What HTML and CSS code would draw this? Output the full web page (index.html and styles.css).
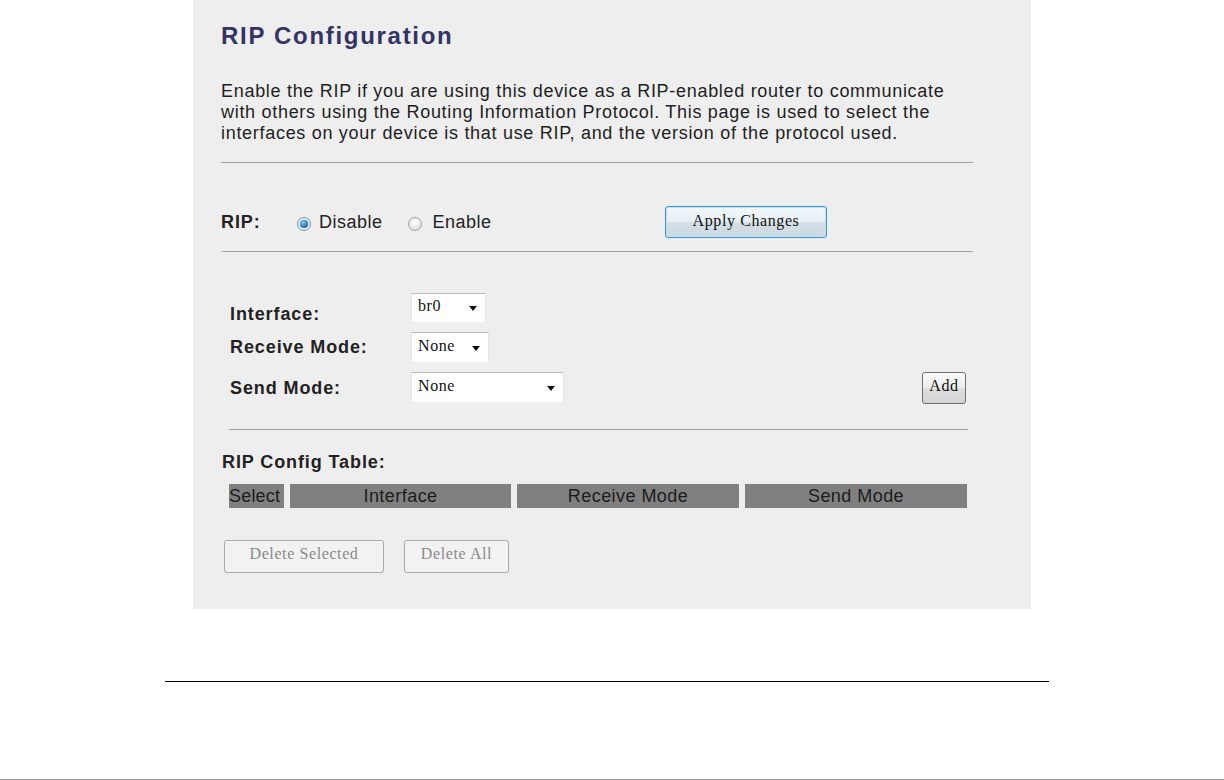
FILE: index.html
```html
<!DOCTYPE html>
<html>
<head>
<meta charset="utf-8">
<link rel="stylesheet" href="styles.css">
</head>
<body>
<div class="page">
  <div class="panel">
    <h1 class="title">RIP Configuration</h1>
    <p class="desc">Enable the RIP if you are using this device as a RIP-enabled router to communicate with others using the Routing Information Protocol. This page is used to select the interfaces on your device is that use RIP, and the version of the protocol used.</p>
    <hr class="rule rule-1">
    <div class="rip-row">
      <span class="lbl rip-lbl">RIP:</span>
      <label class="radio r-dis"><span class="dot on"></span>Disable</label>
      <label class="radio r-en"><span class="dot"></span>Enable</label>
      <button class="btn-apply">Apply Changes</button>
    </div>
    <hr class="rule rule-2">
    <div class="form">
      <div class="frow r1">
        <span class="lbl flbl">Interface:</span>
        <span class="sel s1">br0<i class="arr"></i></span>
      </div>
      <div class="frow r2">
        <span class="lbl flbl">Receive Mode:</span>
        <span class="sel s2">None<i class="arr"></i></span>
      </div>
      <div class="frow r3">
        <span class="lbl flbl">Send Mode:</span>
        <span class="sel s3">None<i class="arr"></i></span>
        <button class="btn-add">Add</button>
      </div>
    </div>
    <hr class="rule rule-3">
    <div class="lbl tbl-title">RIP Config Table:</div>
    <div class="thead">
      <span class="th c1">Select</span>
      <span class="th c2">Interface</span>
      <span class="th c3">Receive Mode</span>
      <span class="th c4">Send Mode</span>
    </div>
    <div class="del-row">
      <button class="btn-dis b1">Delete Selected</button>
      <button class="btn-dis b2">Delete All</button>
    </div>
  </div>
  <div class="black-line"></div>
</div>
<div class="bottom-line"></div>
</body>
</html>
```
FILE: styles.css
```css
html, body { margin: 0; padding: 0; background: #ffffff; }
body { width: 1224px; height: 780px; position: relative; overflow: hidden; font-family: "Liberation Sans", Arial, sans-serif; color: #222; }
.page { height: 779px; }
.panel { margin-left: 193px; width: 838px; height: 609px; background: #eeeeee; padding-left: 28px; box-sizing: border-box; overflow: hidden; }
.panel > * { width: 752px; }
.title { margin: 0; padding-top: 22px; font-size: 24px; line-height: 28px; font-weight: bold; color: #333366; letter-spacing: 1.7px; }
.desc { margin: 31px 0 0 0; width: 738px; font-size: 18px; line-height: 21px; color: #1e1e1e; letter-spacing: 0.7px; }
.lbl { font-weight: bold; font-size: 18px; line-height: 21px; letter-spacing: 0.9px; color: #222; }
.rule { border: 0; height: 1px; background: #a3a3a3; margin: 0; }
.rule-1 { margin-top: 18px; width: 752px; }
.rip-row { display: flex; align-items: flex-start; height: 88px; padding-top: 43px; box-sizing: border-box; font-size: 18px; letter-spacing: 0.5px; }
.rip-lbl { width: 77px; margin-top: 6px; }
.radio { display: flex; align-items: flex-start; margin-top: 6px; line-height: 21px; color: #222; }
.r-dis { margin-right: 25px; }
.dot { width: 14px; height: 14px; border-radius: 50%; border: 1px solid #a4a4a4; background: radial-gradient(circle at 50% 35%, #ffffff 0%, #e2e2e2 70%, #d0d0d0 100%); margin-top: 5px; margin-right: 8px; box-sizing: border-box; position: relative; flex: none; box-shadow: 0 0 1px #d8d8d8; }
.r-dis .dot { margin-left: -1px; }
.r-en .dot { margin-right: 11px; }
.dot.on { border-color: #7d98ad; background: radial-gradient(circle, #eef4f8 0%, #d6e2ea 100%); }
.dot.on::after { content: ""; position: absolute; left: 2px; top: 2px; width: 8px; height: 8px; border-radius: 50%; background: radial-gradient(circle at 40% 35%, #8fd0f5 0%, #2f7ab3 55%, #1a4a72 100%); }
.btn-apply { margin-left: auto; margin-right: 146px; width: 162px; height: 32px; border: 1px solid #3f95c6; border-radius: 3px; background: linear-gradient(#f3f8fb 0%, #e6eef3 48%, #d4dfe6 52%, #ccd8df 100%); box-shadow: 0 0 0 1px #bfe0f2 inset, 0 0 2px #d9ecf7; font-family: "Liberation Serif", serif; font-size: 16px; letter-spacing: 0.6px; color: #111; padding: 0 0 3px 0; }
.rule-2 { width: 751px; margin-left: 1px; }
.form { padding-top: 41px; padding-left: 9px; box-sizing: border-box; }
.frow { display: flex; align-items: center; }
.flbl { width: 181px; flex: none; }
.r1 { height: 30px; }
.r1 .flbl { margin-top: 13px; }
.r2 { height: 31px; margin-top: 9px; }
.r3 { height: 32px; margin-top: 9px; }
.sel { display: flex; align-items: center; background: #fff; border-top: 1px solid #bcbcbc; border-left: 1px solid #e4e4e4; border-right: 1px solid #e4e4e4; border-bottom: 1px solid #ececec; font-family: "Liberation Serif", serif; font-size: 16px; letter-spacing: 0.6px; color: #111; padding-left: 6px; padding-bottom: 4px; box-sizing: border-box; position: relative; height: 100%; flex: none; }
.s1 { width: 75px; }
.s2 { width: 78px; }
.s3 { width: 153px; height: 31px; align-self: flex-start; }
.arr { position: absolute; right: 8px; top: 50%; margin-top: -2px; width: 0; height: 0; border-left: 4.5px solid transparent; border-right: 4.5px solid transparent; border-top: 5px solid #111; }
.btn-add { margin-left: auto; margin-right: 7px; width: 44px; height: 32px; border: 1px solid #6e6e6e; border-radius: 3px; background: linear-gradient(#fbfbfb 0%, #eeeeee 48%, #dddddd 52%, #d5d5d5 100%); font-family: "Liberation Serif", serif; font-size: 16px; letter-spacing: 0.6px; color: #111; padding: 0 0 4px 0; }
.rule-3 { margin-top: 25px; margin-left: 8px; width: 739px; }
.tbl-title { margin-top: 22px; margin-left: 1px; }
.thead { display: flex; margin-top: 11px; margin-left: 8px; gap: 6px; }
.th { background: #808080; height: 24px; line-height: 24px; font-size: 18px; letter-spacing: 0.45px; color: #1c1c1c; text-align: center; white-space: nowrap; overflow: hidden; }
.c1 { width: 55px; text-align: left; letter-spacing: 0.2px; }
.c2 { width: 221px; }
.c3 { width: 222px; }
.c4 { width: 222px; }
.del-row { display: flex; margin-top: 32px; margin-left: 3px; gap: 20px; }
.btn-dis { height: 33px; border: 1px solid #a9a9a9; border-radius: 3px; background: #f2f2f2; font-family: "Liberation Serif", serif; font-size: 16px; letter-spacing: 0.6px; color: #8a8a8a; padding: 0 0 5px 0; }
.b1 { width: 160px; }
.b2 { width: 105px; }
.black-line { margin-left: 165px; margin-top: 72px; width: 884px; height: 1px; background: #000; }
.bottom-line { position: absolute; left: 0; bottom: 0; width: 1224px; height: 1px; background: #9a9a9a; }
```
